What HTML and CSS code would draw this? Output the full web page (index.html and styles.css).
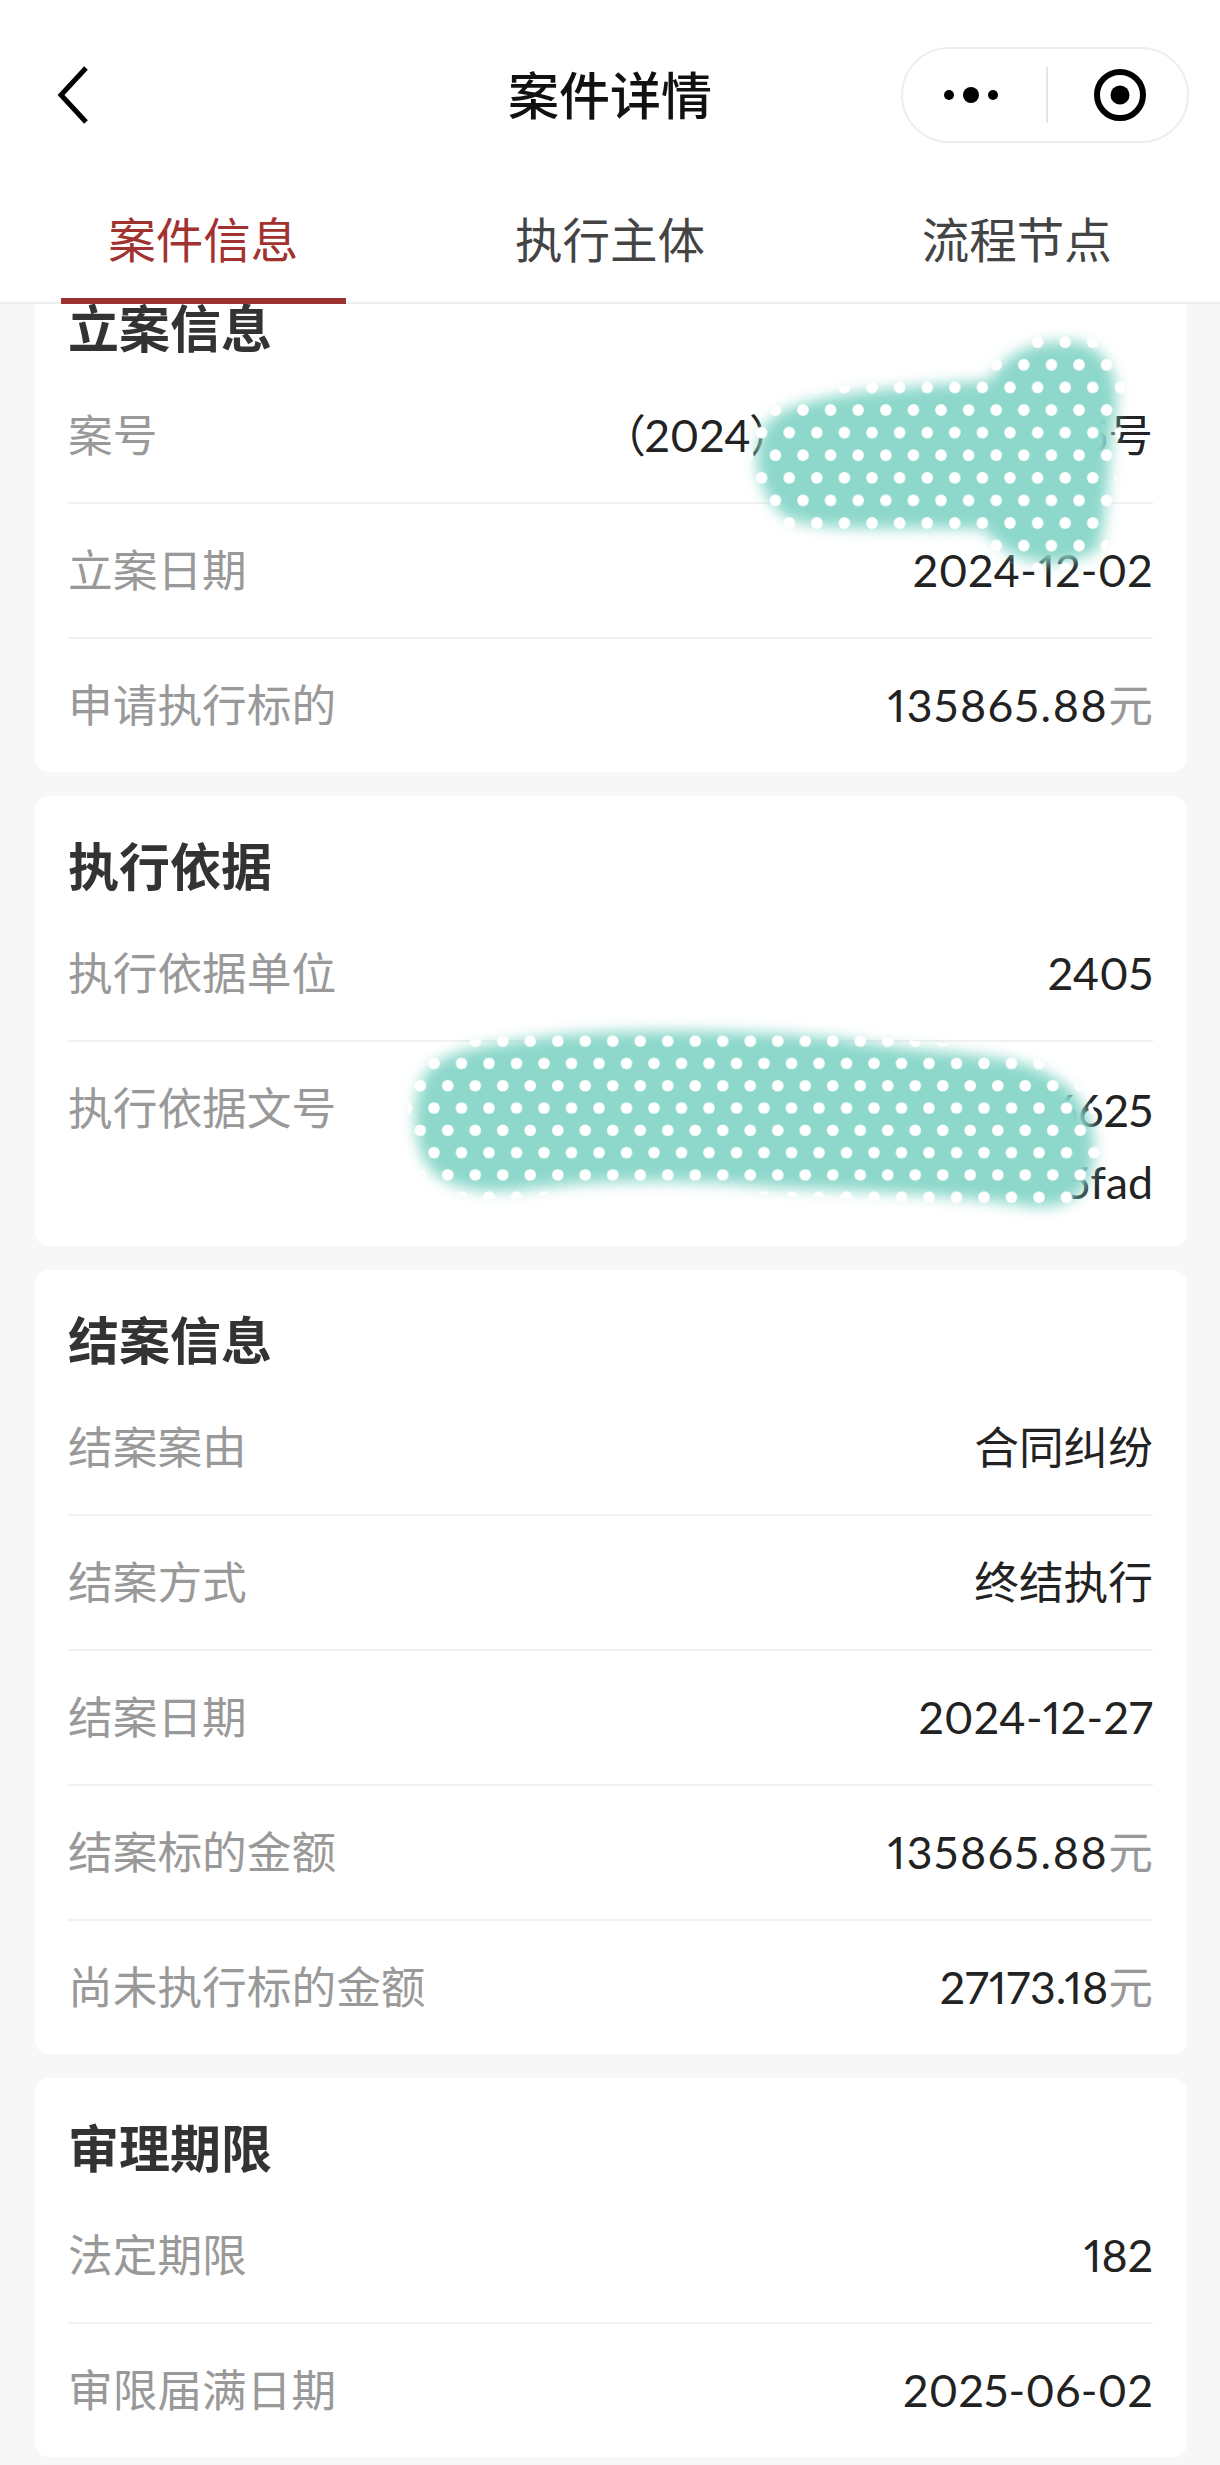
FILE: index.html
```html
<!DOCTYPE html>
<html lang="zh-CN">
<head>
    <meta charset="UTF-8">
    <meta name="viewport" content="width=device-width, initial-scale=1.0">
    <title>案件详情</title>
    <link rel="stylesheet" href="styles.css">
</head>
<body>
    <div class="page">
        <header class="top">
            <div class="nav">
                <svg class="back" width="34" height="60" viewBox="0 0 34 60">
                    <path d="M30 3 L5 30 L30 57" fill="none" stroke="#000" stroke-width="5"/>
                </svg>
                <h1 class="nav-title">案件详情</h1>
                <div class="capsule">
                    <svg width="56" height="18" viewBox="0 0 56 18">
                        <circle cx="6" cy="9" r="5" fill="#000"/>
                        <circle cx="28" cy="9" r="8" fill="#000"/>
                        <circle cx="50" cy="9" r="5" fill="#000"/>
                    </svg>
                    <span class="capsule-line"></span>
                    <svg width="54" height="54" viewBox="0 0 54 54">
                        <circle cx="27" cy="27" r="23" fill="none" stroke="#000" stroke-width="6"/>
                        <circle cx="27" cy="27" r="9.5" fill="#000"/>
                    </svg>
                </div>
            </div>
            <nav class="tabs">
                <a class="tab active">案件信息</a>
                <a class="tab">执行主体</a>
                <a class="tab">流程节点</a>
            </nav>
        </header>

        <main class="content">
            <section class="card">
                <h2>立案信息</h2>
                <div class="row"><span class="label">案号</span><span class="value"><span class="case-year">（2024）</span><span class="gap"></span>5号</span></div>
                <div class="row"><span class="label">立案日期</span><span class="value date">2024-12-02</span></div>
                <div class="row"><span class="label">申请执行标的</span><span class="value"><span class="amount">135865.88</span><em>元</em></span></div>
            </section>

            <section class="card">
                <h2>执行依据</h2>
                <div class="row"><span class="label">执行依据单位</span><span class="value">2405</span></div>
                <div class="row row-tall"><span class="label">执行依据文号</span><span class="value"><span class="line">6625</span><span class="line">5fad</span></span></div>
            </section>

            <section class="card">
                <h2>结案信息</h2>
                <div class="row"><span class="label">结案案由</span><span class="value">合同纠纷</span></div>
                <div class="row"><span class="label">结案方式</span><span class="value">终结执行</span></div>
                <div class="row"><span class="label">结案日期</span><span class="value date">2024-12-27</span></div>
                <div class="row"><span class="label">结案标的金额</span><span class="value"><span class="amount">135865.88</span><em>元</em></span></div>
                <div class="row"><span class="label">尚未执行标的金额</span><span class="value">27173.18<em>元</em></span></div>
            </section>

            <section class="card">
                <h2>审理期限</h2>
                <div class="row"><span class="label">法定期限</span><span class="value">182</span></div>
                <div class="row"><span class="label">审限届满日期</span><span class="value date">2025-06-02</span></div>
            </section>
        </main>

        <!-- smear marks painted over the screenshot -->
        <svg class="smear" width="1220" height="2465" viewBox="0 0 1220 2465">
            <defs>
                <filter id="soft" x="-10%" y="-20%" width="120%" height="140%">
                    <feGaussianBlur stdDeviation="7"/>
                </filter>
                <pattern id="dots1" width="27.6" height="45.2" patternUnits="userSpaceOnUse" patternTransform="translate(803 410)">
                    <circle cx="0" cy="0" r="5.8" fill="#fff"/>
                    <circle cx="27.6" cy="0" r="5.8" fill="#fff"/>
                    <circle cx="0" cy="45.2" r="5.8" fill="#fff"/>
                    <circle cx="27.6" cy="45.2" r="5.8" fill="#fff"/>
                    <circle cx="13.8" cy="22.6" r="5.8" fill="#fff"/>
                </pattern>
                <pattern id="dots2" width="27.5" height="44.6" patternUnits="userSpaceOnUse" patternTransform="translate(434 1108)">
                    <circle cx="0" cy="0" r="5.8" fill="#fff"/>
                    <circle cx="27.5" cy="0" r="5.8" fill="#fff"/>
                    <circle cx="0" cy="44.6" r="5.8" fill="#fff"/>
                    <circle cx="27.5" cy="44.6" r="5.8" fill="#fff"/>
                    <circle cx="13.75" cy="22.3" r="5.8" fill="#fff"/>
                </pattern>
                <path id="blob1" d="M770 420 C800 392 900 388 990 380 C1010 345 1050 338 1082 343 C1114 353 1122 390 1114 420 C1108 470 1108 520 1098 550 C1060 572 1010 566 985 530 C930 525 840 535 790 520 C750 495 750 440 770 420 Z"/>
                <path id="blob2" d="M420 1085 C430 1050 480 1045 560 1035 C650 1028 760 1030 850 1040 C930 1055 1010 1050 1050 1075 C1090 1095 1100 1140 1092 1170 C1085 1200 1060 1212 1020 1205 C950 1195 850 1190 780 1188 C680 1178 600 1180 520 1190 C470 1195 430 1185 420 1150 C412 1125 414 1105 420 1085 Z"/>
                <mask id="mask1" maskUnits="userSpaceOnUse" x="0" y="0" width="1220" height="2465">
                    <use href="#blob1" fill="#fff" stroke="#fff" stroke-width="16"/>
                </mask>
                <mask id="mask2" maskUnits="userSpaceOnUse" x="0" y="0" width="1220" height="2465">
                    <use href="#blob2" fill="#fff" stroke="#fff" stroke-width="16"/>
                </mask>
            </defs>
            <use href="#blob1" fill="#8dd8cb" filter="url(#soft)"/>
            <rect x="730" y="320" width="410" height="270" fill="url(#dots1)" mask="url(#mask1)"/>
            <use href="#blob2" fill="#8dd8cb" filter="url(#soft)"/>
            <rect x="400" y="1020" width="720" height="210" fill="url(#dots2)" mask="url(#mask2)"/>
        </svg>
    </div>
</body>
</html>
```

FILE: styles.css
```css
* {
    box-sizing: border-box;
}

body {
    margin: 0;
    background: #f7f7f7;
    font-family: Lato, "Noto Sans CJK SC", sans-serif;
    font-variant-numeric: proportional-nums;
    color: #222;
}

.page {
    position: relative;
    width: 1220px;
    height: 2465px;
    overflow: hidden;
}

.top {
    position: relative;
    z-index: 2;
    height: 304px;
    background: #fff;
    border-bottom: 2px solid #eeeeee;
}

.nav {
    display: grid;
    grid-template-columns: 1fr auto 1fr;
    align-items: center;
    height: 190px;
    padding: 0 31px;
}

.back {
    margin-left: 25px;
}

.nav-title {
    margin: 0 0 5px;
    font-size: 51px;
    font-weight: 500;
    color: #111;
}

.capsule {
    justify-self: end;
    display: flex;
    align-items: center;
    width: 288px;
    height: 96px;
    padding-left: 40px;
    border: 2px solid #eeeeee;
    border-radius: 48px;
}

.capsule-line {
    width: 2px;
    height: 56px;
    margin: 0 45px 0 47px;
    background: #e6e6e6;
}

.tabs {
    display: flex;
    height: 112px;
}

.tab {
    position: relative;
    flex: 1;
    padding-top: 16px;
    text-align: center;
    font-size: 47.5px;
    line-height: 68px;
    color: #444;
}

.tab.active {
    color: #a2322f;
}

.tab.active::after {
    content: "";
    position: absolute;
    left: 61px;
    bottom: -2px;
    width: 285px;
    height: 6px;
    background: #9c3230;
}

.content {
    display: flex;
    flex-direction: column;
    gap: 24px;
    margin-top: -46px;
    padding: 0 33px 0 35px;
}

.card {
    padding: 40px 34px 0 33px;
    background: #fff;
    border-radius: 14px;
}

.card h2 {
    margin: 0 0 9px;
    font-size: 51px;
    line-height: 62px;
    font-weight: 700;
    color: #333;
}

.row {
    display: flex;
    justify-content: space-between;
    padding: 32px 0;
    border-bottom: 2px solid #f1f1f1;
    font-size: 44.7px;
    line-height: 69px;
}

.row:last-child {
    border-bottom: 0;
}

.row-tall {
    padding-bottom: 28px;
}

.label {
    color: #999;
}

.value {
    color: #222;
    text-align: right;
}

.value em {
    font-style: normal;
    color: #999;
}

.amount {
    letter-spacing: 1.6px;
}

.date {
    letter-spacing: 0.3px;
}

.case-year {
    font-feature-settings: "palt";
}

.gap {
    display: inline-block;
    width: 311px;
}

.line {
    display: block;
    line-height: 72px;
}

.smear {
    position: absolute;
    top: 0;
    left: 0;
    z-index: 1;
    pointer-events: none;
}
```
